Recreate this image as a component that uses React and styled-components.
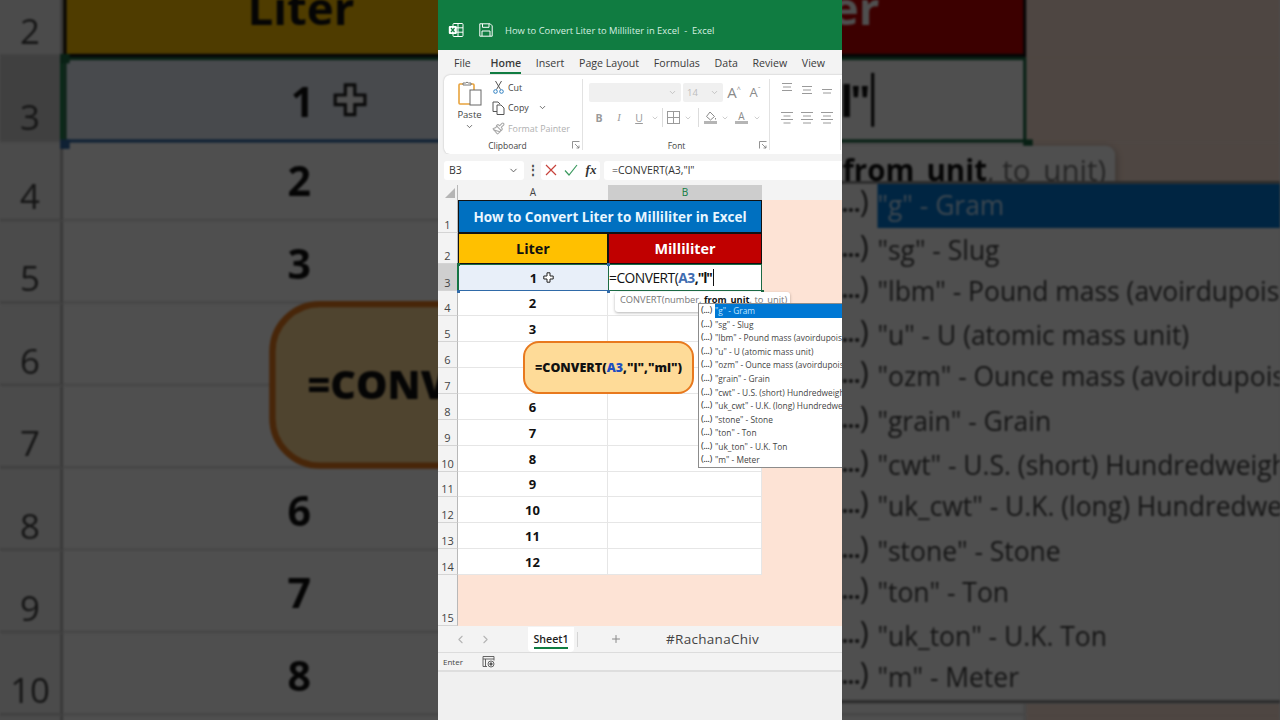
import React from 'react';
import styled, { createGlobalStyle } from 'styled-components';
import { ChevronDown, ChevronLeft, ChevronRight, Plus, Paintbrush } from 'lucide-react';

const GlobalStyle = createGlobalStyle`
  html, body {
    margin: 0;
    padding: 0;
    background: #4d4d4d;
    font-family: "Open Sans", "Noto Sans", sans-serif;
  }
`;

const Stage = styled.div`
  display: flex;
  width: 1280px;
  height: 720px;
  overflow: hidden;
`;

const SidePanel = styled.div`
  width: 438px;
  height: 720px;
  flex: none;
  overflow: hidden;
`;

const ZoomCopy = styled.div`
  width: 404px;
  transform-origin: 0 0;
  transform: scale(3.168) translate(${p => -p.$shift}px, -61px);
  filter: brightness(0.31) blur(0.3px);
`;

const Window = styled.div`
  width: 404px;
  height: 720px;
  flex: none;
  display: flex;
  flex-direction: column;
  background: #f0f0f0;
  overflow: hidden;
`;

const TitleBar = styled.div`
  height: 50px;
  flex: none;
  display: flex;
  align-items: center;
  padding: 10px 0 0 10px;
  box-sizing: border-box;
  background: #107c41;
  color: #d4efe0;
  font-size: 9.4px;
`;

const SaveIcon = styled.svg`
  margin: 0 12px 0 15px;
`;

const MenuBar = styled.div`
  height: 25px;
  flex: none;
  display: flex;
  align-items: center;
  gap: 14.7px;
  padding-left: 16px;
  background: #f3f3f3;
  font-size: 10.6px;
  color: #3a3a3a;
`;

const MenuTab = styled.span`
  position: relative;
  font-weight: ${p => (p.$active ? 600 : 400)};
  margin-right: ${p => (p.$first ? 5 : 0)}px;
  white-space: nowrap;

  &::after {
    content: '';
    display: ${p => (p.$active ? 'block' : 'none')};
    position: absolute;
    left: 0;
    right: 0;
    bottom: -4px;
    height: 2px;
    background: #107c41;
  }
`;

const RibbonArea = styled.div`
  height: 79px;
  flex: none;
  padding-left: 6px;
  background: #f3f3f3;
`;

const Ribbon = styled.div`
  width: 420px;
  height: 79px;
  display: flex;
  background: #fff;
  border-radius: 6px 0 0 6px;
  box-shadow: 0 0 2px rgba(0, 0, 0, 0.25);
`;

const Group = styled.div`
  position: relative;
  width: ${p => p.$w}px;
  flex: none;
  box-sizing: border-box;
  display: flex;
  flex-direction: column;
  padding: 5px 0 0;

  &::after {
    content: '';
    position: absolute;
    right: 0;
    top: 4px;
    bottom: 4px;
    width: 1px;
    background: #e2e2e2;
  }
`;

const GroupBody = styled.div`
  flex: 1;
  display: flex;
`;

const GroupLabel = styled.div`
  position: relative;
  height: 16px;
  padding-right: ${p => p.$inset || 0}px;
  padding-top: 1px;
  text-align: center;
  font-size: 8.5px;
  line-height: 16px;
  color: #444;
`;

const Launcher = styled.svg`
  position: absolute;
  right: 3px;
  top: 4px;
`;

const PasteColumn = styled.div`
  width: 48px;
  padding-left: 3px;
  box-sizing: border-box;
  display: flex;
  flex-direction: column;
  align-items: center;
  font-size: 9.5px;
  color: #444;
  line-height: 12px;
`;

const PasteText = styled.span`
  margin: 2px 0 1px;
`;

const SmallColumn = styled.div`
  display: flex;
  flex-direction: column;
  gap: 6.5px;
`;

const SmallAction = styled.div`
  height: 14px;
  display: flex;
  align-items: center;
  gap: 3px;
  font-size: 8.9px;
  color: ${p => (p.$muted ? '#b0b0b0' : '#444')};
`;

const CopyChevron = styled.span`
  display: flex;
  margin-left: 6px;
`;

const FontColumn = styled.div`
  flex: 1;
  display: flex;
  flex-direction: column;
  gap: 6px;
  padding: 3px 0 0 6px;
`;

const FontRow = styled.div`
  display: flex;
  align-items: center;
  height: ${p => p.$h}px;
`;

const SelectBox = styled.div`
  width: ${p => p.$w}px;
  height: 19px;
  flex: none;
  margin-right: 2px;
  padding: 0 4px;
  box-sizing: border-box;
  display: flex;
  align-items: center;
  justify-content: space-between;
  background: #f0f0f0;
  border-radius: 2px;
  font-size: 9.5px;
  color: #bdbdbd;
`;

const GrowLetter = styled.span`
  width: ${p => p.$w}px;
  flex: none;
  text-align: center;
  font-size: ${p => p.$size}px;
  line-height: 1;
  color: #8a8a8a;
`;

const GrowMark = styled.sup`
  font-size: 7px;
`;

const FormatKey = styled.span`
  width: ${p => p.$w}px;
  flex: none;
  text-align: center;
  font-size: 10.5px;
  color: #9a9a9a;
  font-weight: ${p => (p.$bold ? 700 : 400)};
  font-style: ${p => (p.$italic ? 'italic' : 'normal')};
  font-family: ${p => (p.$italic ? '"Liberation Serif", serif' : 'inherit')};
  text-decoration: ${p => (p.$under ? 'underline' : 'none')};
`;

const RowDivider = styled.span`
  width: 1px;
  height: 19px;
  flex: none;
  margin: 0 4px 0 2px;
  background: #dcdcdc;
`;

const SlotIcon = styled.span`
  width: ${p => p.$w}px;
  flex: none;
  display: flex;
  flex-direction: column;
  align-items: center;
`;

const ColorBar = styled.span`
  width: 13px;
  height: 3px;
  background: #b5b5b5;
`;

const AlignGrid = styled.div`
  display: grid;
  grid-template-columns: repeat(3, 20px);
  grid-auto-rows: 19px;
  row-gap: 9px;
  padding: 0 0 0 7px;
  align-items: center;
  justify-items: center;
`;

const FormulaBar = styled.div`
  height: 31px;
  flex: none;
  display: flex;
  align-items: center;
  padding: 1px 0 0 6px;
  background: #f3f3f3;
  box-sizing: border-box;
`;

const NameBox = styled.div`
  width: 80px;
  height: 19px;
  flex: none;
  padding: 0 5px;
  box-sizing: border-box;
  display: flex;
  align-items: center;
  justify-content: space-between;
  background: #fff;
  border-radius: 3px;
  font-size: 10.5px;
  color: #333;
`;

const GripDots = styled.div`
  width: 17px;
  flex: none;
  text-align: center;
  font-size: 12px;
  font-weight: 700;
  line-height: 12px;
  color: #444;
`;

const FxBox = styled.div`
  width: 59px;
  height: 19px;
  flex: none;
  display: grid;
  grid-template-columns: repeat(3, 20px);
  align-items: center;
  justify-items: center;
  background: #fff;
  border-radius: 3px;
`;

const FxLabel = styled.span`
  font-family: "Liberation Serif", serif;
  font-style: italic;
  font-weight: 700;
  font-size: 13px;
  color: #333;
`;

const FormulaInput = styled.div`
  width: 260px;
  height: 19px;
  flex: none;
  margin-left: 4px;
  padding-left: 8px;
  box-sizing: border-box;
  background: #fff;
  border-radius: 3px 0 0 3px;
  font-size: 10.5px;
  line-height: 19px;
  color: #333;
`;

const Sheet = styled.div`
  position: relative;
  width: 404px;
  height: 441px;
  flex: none;
  overflow: hidden;
  font-family: "Open Sans", "Noto Sans", sans-serif;
`;

const SheetRow = styled.div`
  display: grid;
  grid-template-columns: 20px 150px 154px 80px;
  height: ${p => p.$h}px;
`;

const Corner = styled.div`
  background: #f3f3f3;
  border-right: 1px solid #b8b8b8;
  border-bottom: 1px solid #b8b8b8;
  box-sizing: border-box;
  display: flex;
  align-items: flex-end;
  justify-content: flex-end;
  padding: 0 2px 2px 0;
`;

const ColHead = styled.div`
  box-sizing: border-box;
  text-align: center;
  font-size: 10px;
  line-height: 15px;
  color: ${p => (p.$active ? '#107c41' : '#444')};
  background: ${p => (p.$active ? '#cdcdcd' : '#f3f3f3')};
  border-bottom: 1px solid ${p => (p.$active ? '#107c41' : '#b8b8b8')};
`;

const RowHead = styled.div`
  box-sizing: border-box;
  display: flex;
  align-items: flex-end;
  justify-content: center;
  font-size: 11px;
  line-height: 14px;
  color: #444;
  background: ${p => (p.$active ? '#cfcfcf' : '#f3f3f3')};
  border-right: 1px solid ${p => (p.$active ? '#107c41' : '#b8b8b8')};
  border-bottom: 1px solid #d4d4d4;
`;

const Cell = styled.div`
  box-sizing: border-box;
  display: flex;
  align-items: center;
  justify-content: center;
  background: #fff;
  border-bottom: 1px solid #e6e6e6;
  border-right: 1px solid #e6e6e6;
  font-size: 13px;
  font-weight: 700;
  color: #111;
`;

const BannerCell = styled(Cell)`
  grid-column: span 2;
  background: #0070c0;
  color: #e8f6ff;
  border: 1px solid #111;
  font-size: 13.5px;
`;

const HeadCell = styled(Cell)`
  background: ${p => p.$bg};
  color: ${p => p.$fg};
  border: 1px solid #111;
  font-size: 14.4px;
`;

const PickCell = styled(Cell)`
  position: relative;
  background: #e8eff9;
  border: 1.5px solid #1c6b45;
  border-bottom-color: #2f6aa8;
  border-right: none;
`;

const EditCell = styled(Cell)`
  position: relative;
  justify-content: flex-start;
  border: 1.5px solid #1c6b45;
  font-weight: 400;
  font-size: 13.8px;
  white-space: nowrap;
  letter-spacing: -0.5px;
`;

const Handle = styled.span`
  position: absolute;
  width: 3px;
  height: 3px;
  background: ${p => p.$color};
  ${p => (p.$bottom ? 'bottom: -2.5px;' : 'top: -2.5px;')}
  ${p => (p.$right ? 'right: -2.5px;' : 'left: -2.5px;')}
`;

const CursorIcon = styled.svg`
  position: absolute;
  left: 84px;
  top: 7px;
`;

const Ref = styled.b`
  color: #3f6cb0;
`;

const Strong = styled.b`
  color: #111;
`;

const Quoted = styled.b`
  color: #111;
  letter-spacing: -1px;
`;

const Caret = styled.span`
  display: inline-block;
  width: 1px;
  height: 17px;
  margin-left: 1px;
  background: #111;
`;

const Peach = styled.div`
  background: #fde3d5;
  grid-column: ${p => p.$span || 'auto'};
`;

const Tooltip = styled.div`
  position: absolute;
  left: 177px;
  top: 107px;
  width: 175px;
  height: 20px;
  padding-left: 5px;
  box-sizing: border-box;
  background: #fff;
  border-radius: 3px;
  box-shadow: 0 1px 3px rgba(0, 0, 0, 0.3);
  font-size: 9.3px;
  line-height: 15.5px;
  color: #777;
  white-space: nowrap;
`;

const Suggestions = styled.div`
  position: absolute;
  left: 260px;
  top: 118px;
  width: 150px;
  background: #fff;
  border: 1px solid #8c8c8c;
  border-right: none;
  box-sizing: border-box;
  display: grid;
  grid-auto-rows: 13.55px;
  font-size: 8.35px;
  color: #444;
`;

const Suggestion = styled.div`
  display: flex;
  align-items: center;
  white-space: nowrap;
  overflow: hidden;
`;

const ArgMark = styled.span`
  width: 16px;
  flex: none;
  padding: 0 0 1px 2px;
  box-sizing: border-box;
  font-size: 9.5px;
  line-height: 12px;
  letter-spacing: -0.2px;
  color: #333;
`;

const ArgDots = styled.b`
  font-size: 7.5px;
`;

const SuggestionText = styled.span`
  flex: 1;
  height: 100%;
  display: flex;
  align-items: center;
  white-space: pre;
  background: ${p => (p.$on ? '#0078d4' : 'transparent')};
  color: ${p => (p.$on ? '#bfe3ff' : '#444')};
`;

const Callout = styled.div`
  position: absolute;
  left: 85px;
  top: 156px;
  width: 171px;
  height: 53px;
  box-sizing: border-box;
  display: flex;
  align-items: center;
  justify-content: center;
  background: #fedb98;
  border: 2px solid #e8791e;
  border-radius: 16px;
  font-size: 12.5px;
  font-weight: 800;
  color: #111;
  white-space: nowrap;
`;

const CalloutRef = styled.span`
  color: #1f4fc0;
`;

const SheetTabs = styled.div`
  height: 26px;
  flex: none;
  display: flex;
  align-items: center;
  background: #f3f3f3;
  border-bottom: 1px solid #dcdcdc;
  color: #b5b5b5;
`;

const TabNav = styled.div`
  width: 90px;
  flex: none;
  padding-left: 16px;
  box-sizing: border-box;
  display: flex;
  gap: 12px;
`;

const SheetTab = styled.div`
  position: relative;
  width: 46px;
  height: 25px;
  flex: none;
  text-align: center;
  line-height: 25px;
  font-size: 10.6px;
  font-weight: 600;
  color: #222;
  background: #fff;
  border-radius: 0 0 4px 4px;

  &::after {
    content: '';
    position: absolute;
    left: 6px;
    right: 6px;
    bottom: 3px;
    height: 1.5px;
    background: #107c41;
  }
`;

const TabDivider = styled.span`
  width: 1px;
  height: 15px;
  margin: 0 32px 0 3px;
  background: #d4d4d4;
`;

const Hashtag = styled.span`
  margin-left: 44px;
  font-size: 13.5px;
  letter-spacing: 0.3px;
  color: #444;
`;

const StatusBar = styled.div`
  height: 17px;
  flex: none;
  display: flex;
  align-items: center;
  gap: 19px;
  padding-left: 5px;
  background: #f3f3f3;
  border-bottom: 2px solid #dedede;
  font-size: 8px;
  color: #444;
`;

const heights = [33, 31, 27, 25, 26, 26, 26, 26, 26, 26, 25, 26, 26, 26];
const values = { 4: 2, 5: 3, 6: 4, 7: 5, 8: 6, 9: 7, 10: 8, 11: 9, 12: 10, 13: 11, 14: 12 };

const units = [
  '"g" - Gram',
  '"sg" - Slug',
  '"lbm" - Pound mass (avoirdupois)',
  '"u" - U (atomic mass unit)',
  '"ozm" - Ounce mass (avoirdupois)',
  '"grain" - Grain',
  '"cwt" - U.S. (short) Hundredweight',
  '"uk_cwt" - U.K. (long) Hundredweight',
  '"stone" - Stone',
  '"ton" - Ton',
  '"uk_ton" - U.K. Ton',
  '"m" - Meter',
];

function LauncherMark() {
  return (
    <Launcher width="8" height="8" viewBox="0 0 8 8" fill="none" stroke="#777" strokeWidth="0.8">
      <path d="M0.5 7.5V0.5H7.5" />
      <path d="M3 3l4 4M7 4.5V7H4.5" />
    </Launcher>
  );
}

function AlignLines({ widths, y = 1 }) {
  return (
    <svg width="14" height="13" viewBox="0 0 14 13" stroke="#9a9a9a" strokeWidth="1">
      {widths.map((w, i) => (
        <line key={i} x1={(14 - w) / 2} x2={(14 + w) / 2} y1={y + i * 3.5 + 0.5} y2={y + i * 3.5 + 0.5} />
      ))}
    </svg>
  );
}

function SheetGrid() {
  return (
    <Sheet>
      <SheetRow $h={15}>
        <Corner>
          <svg width="10" height="10" viewBox="0 0 10 10">
            <path d="M10 0V10H0Z" fill="#b5b5b5" />
          </svg>
        </Corner>
        <ColHead>A</ColHead>
        <ColHead $active>B</ColHead>
        <ColHead />
      </SheetRow>
      {heights.map((h, i) => {
        const n = i + 1;
        return (
          <SheetRow key={n} $h={h}>
            <RowHead $active={n === 3}>{n}</RowHead>
            {n === 1 && <BannerCell>How to Convert Liter to Milliliter in Excel</BannerCell>}
            {n === 2 && <HeadCell $bg="#ffc000" $fg="#111">Liter</HeadCell>}
            {n === 2 && <HeadCell $bg="#c00000" $fg="#fff">Milliliter</HeadCell>}
            {n === 3 && (
              <PickCell>
                1
                <CursorIcon width="11" height="11" viewBox="0 0 11 11" fill="#fff" stroke="#222" strokeWidth="1">
                  <path d="M4 .8h3v3.2h3.2v3H7v3.2H4V7H.8V4H4Z" />
                </CursorIcon>
                <Handle $color="#1c6b45" />
                <Handle $color="#2f6aa8" $bottom />
              </PickCell>
            )}
            {n === 3 && (
              <EditCell>
                =CONVERT(<Ref>A3</Ref><Quoted>,"l"</Quoted><Caret />
                <Handle $color="#2f6aa8" />
                <Handle $color="#2f6aa8" $bottom />
                <Handle $color="#1c6b45" $bottom $right />
              </EditCell>
            )}
            {n > 3 && <Cell>{values[n]}</Cell>}
            {n > 3 && <Cell />}
            <Peach />
          </SheetRow>
        );
      })}
      <SheetRow $h={51}>
        <RowHead>15</RowHead>
        <Peach $span="span 3" />
      </SheetRow>
      <Tooltip>
        CONVERT(number, <Strong>from_unit</Strong>, to_unit)
      </Tooltip>
      <Suggestions>
        {units.map((u, i) => (
          <Suggestion key={u}>
            <ArgMark>(<ArgDots>...</ArgDots>)</ArgMark>
            <SuggestionText $on={i === 0}>{u}</SuggestionText>
          </Suggestion>
        ))}
      </Suggestions>
      <Callout>
        =CONVERT(<CalloutRef>A3</CalloutRef>,"l","ml")
      </Callout>
    </Sheet>
  );
}

export default function App() {
  return (
    <Stage>
      <GlobalStyle />
      <SidePanel aria-hidden="true">
        <ZoomCopy $shift={0}>
          <SheetGrid />
        </ZoomCopy>
      </SidePanel>
      <Window>
        <TitleBar>
          <svg width="16" height="16" viewBox="0 0 16 16" fill="none" stroke="#fff" strokeWidth="1">
            <rect x="5" y="1.5" width="10" height="13" rx="1" />
            <path d="M10 1.5v13M5 5.8h10M5 10.2h10" />
            <rect x="0.8" y="4" width="8" height="8" rx="1" fill="#fff" stroke="none" />
            <path d="M3 6l3.5 4M6.5 6L3 10" stroke="#107c41" strokeWidth="1.2" />
          </svg>
          <SaveIcon width="14" height="14" viewBox="0 0 14 14" fill="none" stroke="#fff" strokeWidth="1">
            <path d="M.8.8h10.4l2 2v10.4H.8Z" />
            <path d="M3.5.8v3.5h6.5V.8M3 13.2V8h8v5.2" />
          </SaveIcon>
          How to Convert Liter to Milliliter in Excel&nbsp; -&nbsp; Excel
        </TitleBar>
        <MenuBar>
          <MenuTab $first>File</MenuTab>
          <MenuTab $active>Home</MenuTab>
          <MenuTab>Insert</MenuTab>
          <MenuTab>Page Layout</MenuTab>
          <MenuTab>Formulas</MenuTab>
          <MenuTab>Data</MenuTab>
          <MenuTab>Review</MenuTab>
          <MenuTab>View</MenuTab>
        </MenuBar>
        <RibbonArea>
          <Ribbon>
            <Group $w={139}>
              <GroupBody>
                <PasteColumn>
                  <svg width="26" height="27" viewBox="0 0 26 27" fill="none">
                    <rect x="2" y="4" width="15" height="20" rx="1" stroke="#e8a33d" strokeWidth="1.6" />
                    <path d="M6 5V3h2.5a2 2 0 0 1 3 0H14v2Z" fill="#fff" stroke="#777" strokeWidth="1" />
                    <rect x="13" y="10" width="11" height="15" fill="#fff" stroke="#666" strokeWidth="1" />
                  </svg>
                  <PasteText>Paste</PasteText>
                  <ChevronDown size={9} color="#444" />
                </PasteColumn>
                <SmallColumn>
                  <SmallAction>
                    <svg width="13" height="14" viewBox="0 0 13 14" fill="none" stroke="#555" strokeWidth="1">
                      <path d="M3.5 1l5 8.5M9.5 1l-5 8.5" />
                      <circle cx="3.5" cy="11.5" r="1.8" stroke="#2f7fc1" />
                      <circle cx="9.5" cy="11.5" r="1.8" stroke="#2f7fc1" />
                    </svg>
                    Cut
                  </SmallAction>
                  <SmallAction>
                    <svg width="13" height="14" viewBox="0 0 13 14" fill="none" stroke="#555" strokeWidth="1">
                      <path d="M5 10.5H1V1h5l2 2" />
                      <path d="M5 4h4l3 3v6.5H5Z" fill="#fff" />
                    </svg>
                    Copy
                    <CopyChevron><ChevronDown size={9} color="#444" /></CopyChevron>
                  </SmallAction>
                  <SmallAction $muted>
                    <Paintbrush size={13} color="#a8a8a8" />
                    Format Painter
                  </SmallAction>
                </SmallColumn>
              </GroupBody>
              <GroupLabel $inset={12}>
                Clipboard
                <LauncherMark />
              </GroupLabel>
            </Group>
            <Group $w={187}>
              <GroupBody>
                <FontColumn>
                  <FontRow $h={19}>
                    <SelectBox $w={92}>
                      <span />
                      <ChevronDown size={9} color="#b5b5b5" />
                    </SelectBox>
                    <SelectBox $w={40}>
                      14
                      <ChevronDown size={9} color="#b5b5b5" />
                    </SelectBox>
                    <GrowLetter $w={18} $size={15}>A<GrowMark>^</GrowMark></GrowLetter>
                    <GrowLetter $w={24} $size={13}>A<GrowMark>ˇ</GrowMark></GrowLetter>
                  </FontRow>
                  <FontRow $h={19}>
                    <FormatKey $w={20} $bold>B</FormatKey>
                    <FormatKey $w={20} $italic>I</FormatKey>
                    <FormatKey $w={20} $under>U</FormatKey>
                    <SlotIcon $w={11}><ChevronDown size={8} color="#b5b5b5" /></SlotIcon>
                    <RowDivider />
                    <SlotIcon $w={13}>
                      <svg width="13" height="13" viewBox="0 0 13 13" fill="none" stroke="#9a9a9a" strokeWidth="1">
                        <rect x=".5" y=".5" width="12" height="12" />
                        <path d="M6.5 .5v12M.5 6.5h12" />
                      </svg>
                    </SlotIcon>
                    <SlotIcon $w={16}><ChevronDown size={8} color="#b5b5b5" /></SlotIcon>
                    <RowDivider />
                    <SlotIcon $w={15}>
                      <svg width="13" height="10" viewBox="0 0 13 10" fill="none" stroke="#8a8a8a" strokeWidth="1">
                        <path d="M6 1l4.5 4.5L6.5 9 2.5 5.5Z" />
                        <path d="M11.5 7v1.5" />
                      </svg>
                      <ColorBar />
                    </SlotIcon>
                    <SlotIcon $w={14}><ChevronDown size={8} color="#b5b5b5" /></SlotIcon>
                    <SlotIcon $w={19}>
                      <GrowLetter $w={13} $size={10}>A</GrowLetter>
                      <ColorBar />
                    </SlotIcon>
                    <SlotIcon $w={12}><ChevronDown size={8} color="#b5b5b5" /></SlotIcon>
                  </FontRow>
                </FontColumn>
              </GroupBody>
              <GroupLabel>
                Font
                <LauncherMark />
              </GroupLabel>
            </Group>
            <Group $w={71}>
              <AlignGrid>
                <AlignLines widths={[10, 8, 10]} y={0} />
                <AlignLines widths={[10, 8, 10]} y={3} />
                <AlignLines widths={[10, 8, 10]} y={6} />
                <AlignLines widths={[12, 7, 12, 7]} />
                <AlignLines widths={[12, 8, 12, 8]} />
                <AlignLines widths={[12, 8, 12, 8]} />
              </AlignGrid>
            </Group>
          </Ribbon>
        </RibbonArea>
        <FormulaBar>
          <NameBox>
            B3
            <ChevronDown size={11} color="#555" />
          </NameBox>
          <GripDots>⋮</GripDots>
          <FxBox>
            <svg width="12" height="12" viewBox="0 0 12 12" stroke="#c7423b" strokeWidth="1.2">
              <path d="M1 1l10 10M11 1L1 11" />
            </svg>
            <svg width="14" height="12" viewBox="0 0 14 12" fill="none" stroke="#3c9a5f" strokeWidth="1.2">
              <path d="M1 6.5L5 11 13 1" />
            </svg>
            <FxLabel>fx</FxLabel>
          </FxBox>
          <FormulaInput>=CONVERT(A3,"l"</FormulaInput>
        </FormulaBar>
        <SheetGrid />
        <SheetTabs>
          <TabNav>
            <ChevronLeft size={13} />
            <ChevronRight size={13} />
          </TabNav>
          <SheetTab>Sheet1</SheetTab>
          <TabDivider />
          <Plus size={12} color="#888" />
          <Hashtag>#RachanaChiv</Hashtag>
        </SheetTabs>
        <StatusBar>
          Enter
          <svg width="13" height="13" viewBox="0 0 13 13" fill="none" stroke="#555" strokeWidth="0.9">
            <path d="M5 11.5H1V1.5h11v4M1 4h11M3.5 4v7.5" />
            <circle cx="9" cy="9" r="3" />
            <circle cx="9" cy="9" r="1.2" fill="#555" />
          </svg>
        </StatusBar>
      </Window>
      <SidePanel aria-hidden="true">
        <ZoomCopy $shift={265.8}>
          <SheetGrid />
        </ZoomCopy>
      </SidePanel>
    </Stage>
  );
}
